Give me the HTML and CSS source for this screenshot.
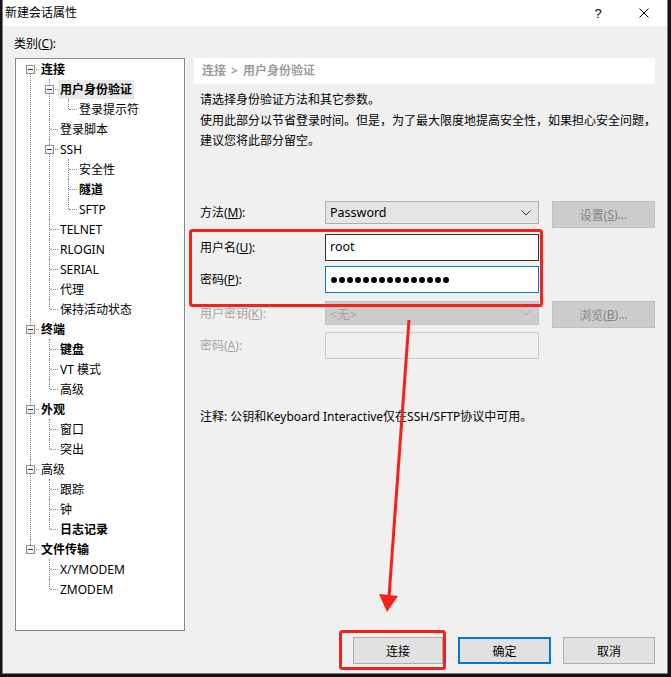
FILE: index.html
```html
<!DOCTYPE html>
<html lang="zh-CN">
<head>
<meta charset="utf-8">
<title>新建会话属性</title>
<link rel="stylesheet" href="styles.css">
</head>
<body>
<div class="window">
  <div class="titlebar">
    <span class="title">新建会话属性</span>
    <span class="tb-btn help">?</span>
    <span class="tb-btn close"><svg width="10" height="10" viewBox="0 0 10 10"><path d="M0.5 0.5 L9.5 9.5 M9.5 0.5 L0.5 9.5" stroke="#000" stroke-width="1" fill="none"/></svg></span>
  </div>
  <div class="content">
    <div class="cat">类别(<u>C</u>):</div>
    <div class="main">
      <div class="tree">
        <ul class="t-root">
          <li><div class="row"><span class="box"></span><span class="lbl b">连接</span></div>
            <ul>
              <li><div class="row"><span class="box"></span><span class="lbl b sel">用户身份验证</span></div>
                <ul>
                  <li><div class="row"><span class="lbl">登录提示符</span></div></li>
                </ul>
              </li>
              <li><div class="row"><span class="lbl">登录脚本</span></div></li>
              <li><div class="row"><span class="box"></span><span class="lbl">SSH</span></div>
                <ul>
                  <li><div class="row"><span class="lbl">安全性</span></div></li>
                  <li><div class="row"><span class="lbl b">隧道</span></div></li>
                  <li><div class="row"><span class="lbl">SFTP</span></div></li>
                </ul>
              </li>
              <li><div class="row"><span class="lbl">TELNET</span></div></li>
              <li><div class="row"><span class="lbl">RLOGIN</span></div></li>
              <li><div class="row"><span class="lbl">SERIAL</span></div></li>
              <li><div class="row"><span class="lbl">代理</span></div></li>
              <li><div class="row"><span class="lbl">保持活动状态</span></div></li>
            </ul>
          </li>
          <li><div class="row"><span class="box"></span><span class="lbl b">终端</span></div>
            <ul>
              <li><div class="row"><span class="lbl b">键盘</span></div></li>
              <li><div class="row"><span class="lbl">VT 模式</span></div></li>
              <li><div class="row"><span class="lbl">高级</span></div></li>
            </ul>
          </li>
          <li><div class="row"><span class="box"></span><span class="lbl b">外观</span></div>
            <ul>
              <li><div class="row"><span class="lbl">窗口</span></div></li>
              <li><div class="row"><span class="lbl">突出</span></div></li>
            </ul>
          </li>
          <li><div class="row"><span class="box"></span><span class="lbl">高级</span></div>
            <ul>
              <li><div class="row"><span class="lbl">跟踪</span></div></li>
              <li><div class="row"><span class="lbl">钟</span></div></li>
              <li><div class="row"><span class="lbl b">日志记录</span></div></li>
            </ul>
          </li>
          <li><div class="row"><span class="box"></span><span class="lbl b">文件传输</span></div>
            <ul>
              <li><div class="row"><span class="lbl">X/YMODEM</span></div></li>
              <li><div class="row"><span class="lbl">ZMODEM</span></div></li>
            </ul>
          </li>
        </ul>
      </div>
      <div class="panel">
        <div class="crumb">连接 &gt; 用户身份验证</div>
        <p class="p1">请选择身份验证方法和其它参数。</p>
        <p class="p2">使用此部分以节省登录时间。但是，为了最大限度地提高安全性，如果担心安全问题，<br>建议您将此部分留空。</p>
        <div class="form">
          <div class="frow r1">
            <span class="flabel tall">方法(<u>M</u>):</span>
            <div class="select"><span>Password</span><svg class="chev" width="10" height="6" viewBox="0 0 10 6"><path d="M0.5 0.5 L5 5 L9.5 0.5" stroke="#333" stroke-width="1" fill="none"/></svg></div>
            <div class="sbtn dis">设置(<u>S</u>)...</div>
          </div>
          <div class="frow r2">
            <span class="flabel">用户名(<u>U</u>):</span>
            <div class="input hover"><span>root</span></div>
          </div>
          <div class="frow r3">
            <span class="flabel">密码(<u>P</u>):</span>
            <div class="input focus"><span class="dots"><i></i><i></i><i></i><i></i><i></i><i></i><i></i><i></i><i></i><i></i><i></i><i></i><i></i><i></i><i></i></span></div>
          </div>
          <div class="frow r4">
            <span class="flabel tall4 dl">用户密钥(<u>K</u>):</span>
            <div class="select dsel"><span>&lt;无&gt;</span><svg class="chev" width="10" height="6" viewBox="0 0 10 6"><path d="M0.5 0.5 L5 5 L9.5 0.5" stroke="#a8a8a8" stroke-width="1" fill="none"/></svg></div>
            <div class="sbtn dis">浏览(<u>B</u>)...</div>
          </div>
          <div class="frow r5">
            <span class="flabel dl">密码(<u>A</u>):</span>
            <div class="input dinput"></div>
          </div>
        </div>
        <p class="note">注释: 公钥和Keyboard Interactive仅在SSH/SFTP协议中可用。</p>
      </div>
    </div>
    <div class="buttons">
      <div class="dbtn b-connect">连接</div>
      <div class="dbtn b-ok">确定</div>
      <div class="dbtn b-cancel">取消</div>
    </div>
  </div>
</div>
<svg class="annot" width="671" height="677" viewBox="0 0 671 677">
  <rect x="190.5" y="230.5" width="351" height="75" rx="2" fill="none" stroke="#f5221b" stroke-width="3"/>
  <rect x="340.5" y="631.5" width="104" height="37" rx="2" fill="none" stroke="#f5221b" stroke-width="3"/>
  <path d="M409 320 L389 597" stroke="#f5221b" stroke-width="3" fill="none"/>
  <polygon points="379,594 398,596 387,612" fill="#f5221b"/>
</svg>
</body>
</html>
```
FILE: styles.css
```css
* { box-sizing: border-box; }
body {
  margin: 0;
  background: #141414;
  font-family: "Noto Sans", "Noto Sans CJK SC", sans-serif;
  font-size: 12px;
  color: #000;
  position: relative;
  width: 671px;
  height: 677px;
  overflow: hidden;
}
u { text-decoration: underline; text-underline-offset: 1px; }
.window {
  margin-left: 2px;
  width: 666px;
  height: 674px;
  background: #f0f0f0;
  border-left: 1px solid #7a7a7a;
  border-right: 1px solid #7a7a7a;
  border-bottom: 1px solid #7a7a7a;
}
.titlebar {
  height: 26px;
  background: #fff;
  display: flex;
  align-items: center;
}
.title { flex: 1; padding-left: 2px; line-height: 26px; }
.tb-btn {
  width: 46px;
  height: 26px;
  display: flex;
  align-items: center;
  justify-content: center;
}
.help { font-size: 13px; font-family: "Liberation Sans", sans-serif; }
.content { padding: 0 12px; }
.cat { margin: 10px 0 0 -1px; height: 16px; line-height: 16px; }
.main { display: flex; gap: 9px; margin-top: 6px; height: 573px; }

/* tree */
.tree {
  width: 170px;
  flex: none;
  background: #fff;
  border: 1px solid #838790;
  overflow: hidden;
}
.tree ul { list-style: none; margin: 0; padding: 0 0 0 19px; }
.tree ul.t-root { padding-left: 0; }
.tree li { position: relative; }
.tree li::before {
  content: "";
  position: absolute;
  left: 14px;
  top: 0;
  bottom: 0;
  border-left: 1px dotted #8a8a8a;
}
.tree li:last-child::before { bottom: auto; height: 10px; }
.tree ul.t-root > li:first-child::before { top: 10px; }
.row {
  position: relative;
  height: 20px;
  display: flex;
  align-items: center;
  padding-left: 25px;
  white-space: nowrap;
}
.row::after {
  content: "";
  position: absolute;
  left: 15px;
  top: 10px;
  width: 8px;
  border-top: 1px dotted #8a8a8a;
}
.box {
  position: absolute;
  left: 10px;
  top: 6px;
  width: 9px;
  height: 9px;
  border: 1px solid #919191;
  background: linear-gradient(#ffffff, #ececec);
  z-index: 1;
}
.box::after {
  content: "";
  position: absolute;
  left: 1px;
  top: 3px;
  width: 5px;
  height: 1px;
  background: #1c3c78;
}
.lbl { line-height: 19px; padding: 0 2px; margin-left: -2px; }
.lbl.b { font-weight: bold; }
.lbl.sel { background: #e8e8e8; }

/* panel */
.panel { flex: 1; min-width: 0; }
.crumb {
  height: 26px;
  line-height: 26px;
  background: #fff;
  padding-left: 8px;
  color: #9c9c9c;
  font-weight: bold;
  word-spacing: 2px;
}
.p1 { margin: 6px 0 0 6px; line-height: 20px; }
.p2 { margin: 1px 0 0 6px; line-height: 20px; white-space: nowrap; }
.form { margin-top: 50px; }
.frow {
  display: grid;
  grid-template-columns: 131px 214px 116px;
  height: 27px;
  align-items: start;
}
.r2 { margin-top: 6px; }
.r3 { margin-top: 5px; }
.r4 { margin-top: 8px; }
.r5 { margin-top: 4px; }
.flabel { padding-left: 6px; line-height: 27px; }
.flabel.tall { line-height: 23px; }
.flabel.tall4 { line-height: 25px; }
.flabel.dl { color: #a3a3a3; }
.select {
  height: 23px;
  background: #e5e5e5;
  border: 1px solid #adadad;
  display: flex;
  align-items: center;
  justify-content: space-between;
  padding: 0 7px 0 4px;
  font-size: 12.5px;
}
.select.dsel {
  height: 24px;
  background: #cccccc;
  border-color: #c4c4c4;
  color: #a5a5a5;
}
.sbtn {
  height: 27px;
  margin-left: 13px;
  display: flex;
  align-items: center;
  justify-content: center;
}
.sbtn.dis {
  background: #cccccc;
  border: 1px solid #bfbfbf;
  color: #848484;
}
.input {
  height: 27px;
  background: #fff;
  border: 1px solid #7a7a7a;
  display: flex;
  align-items: center;
  padding: 0 4px 2px;
  font-size: 12.5px;
}
.input.hover { border-color: #333333; }
.input.focus { border-color: #0078d7; padding-bottom: 0; }
.input.dinput { background: #f0f0f0; border-color: #cccccc; }
.dots { display: flex; gap: 2px; padding-left: 1px; }
.dots i {
  display: block;
  width: 6px;
  height: 6px;
  border-radius: 50%;
  background: #000;
}
.note { margin: 48px 0 0 6px; line-height: 20px; }

/* bottom buttons */
.buttons {
  display: flex;
  justify-content: flex-end;
  margin-top: 6px;
  height: 27px;
}
.dbtn {
  height: 27px;
  background: #e1e1e1;
  border: 1px solid #adadad;
  display: flex;
  align-items: center;
  justify-content: center;
}
.b-connect { width: 90px; margin-right: 15px; }
.b-ok { width: 93px; margin-right: 12px; border: 2px solid #0078d7; }
.b-cancel { width: 92px; }

.annot {
  position: absolute;
  left: 0;
  top: 0;
  pointer-events: none;
}
```
